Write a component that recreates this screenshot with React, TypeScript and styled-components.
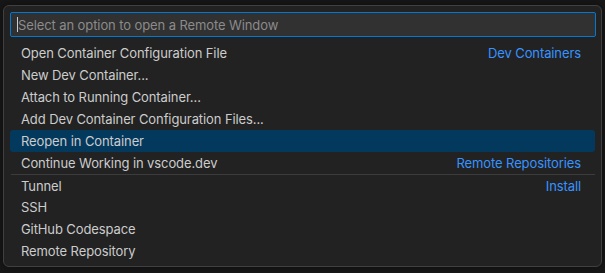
import React from 'react'
import styled, { createGlobalStyle } from 'styled-components'

type Item = { label: string; detail?: string; separator?: boolean; selected?: boolean }

const items: Item[] = [
    { label: 'Open Container Configuration File', detail: 'Dev Containers' },
    { label: 'New Dev Container...' },
    { label: 'Attach to Running Container...' },
    { label: 'Add Dev Container Configuration Files...' },
    { label: 'Reopen in Container', selected: true },
    { label: 'Continue Working in vscode.dev', detail: 'Remote Repositories' },
    { label: 'Tunnel', detail: 'Install', separator: true },
    { label: 'SSH' },
    { label: 'GitHub Codespace' },
    { label: 'Remote Repository' },
]

const GlobalStyle = createGlobalStyle`
    html, body {
        margin: 0;
        padding: 0;
        background: #181818;
        font-family: Inter, "Liberation Sans", sans-serif;
        -webkit-font-smoothing: antialiased;
    }
`

export default function App() {
    return (
        <>
            <GlobalStyle />
            <Page>
                <QuickPick>
                    <InputBox>
                        <Caret />
                        <Placeholder>Select an option to open a Remote Window</Placeholder>
                    </InputBox>
                    <List>
                        {items.map((item) => (
                            <Row key={item.label} $selected={item.selected} $separator={item.separator}>
                                <Label>{item.label}</Label>
                                {item.detail && <Detail>{item.detail}</Detail>}
                            </Row>
                        ))}
                    </List>
                </QuickPick>
            </Page>
        </>
    )
}

const Page = styled.div`
    width: 605px;
    height: 273px;
    box-sizing: border-box;
    padding: 5px 3px 0 3px;
    background: #181818;
    overflow: hidden;
`
const QuickPick = styled.div`
    width: 599px;
    height: 262px;
    box-sizing: border-box;
    background: #222222;
    border: 1px solid #404040;
    border-radius: 6px;
    box-shadow: 0 0 8px 2px rgba(0, 0, 0, 0.36);
    padding: 6px 5px 0 6px;
    display: flex;
    flex-direction: column;
`
const InputBox = styled.div`
    height: 25px;
    box-sizing: border-box;
    background: #313131;
    border: 1px solid #0078d4;
    border-radius: 2px;
    display: flex;
    align-items: center;
    padding-left: 6px;
`
const Caret = styled.span`
    width: 1px;
    height: 15px;
    background: #cccccc;
`
const Placeholder = styled.span`
    font-size: 13px;
    letter-spacing: -0.1px;
    color: #8b8b8b;
    white-space: nowrap;
`
const List = styled.div`
    margin-top: 5px;
    display: flex;
    flex-direction: column;
    padding-right: 1px;
`
const Row = styled.div<{ $selected?: boolean; $separator?: boolean }>`
    height: 22px;
    box-sizing: border-box;
    display: flex;
    align-items: center;
    justify-content: space-between;
    padding: 0 14px 0 11px;
    border-radius: 3px;
    font-size: 13px;
    letter-spacing: -0.1px;
    color: #cccccc;
    background: ${(p) => (p.$selected ? '#04395e' : 'transparent')};
    border-top: ${(p) => (p.$separator ? '1px solid #3c3c3c' : 'none')};
    ${(p) => p.$separator && 'border-radius: 0; margin-left: 1px; padding-left: 10px;'}
`
const Label = styled.span`
    white-space: nowrap;
`
const Detail = styled.span`
    color: #3794ff;
    white-space: nowrap;
`
